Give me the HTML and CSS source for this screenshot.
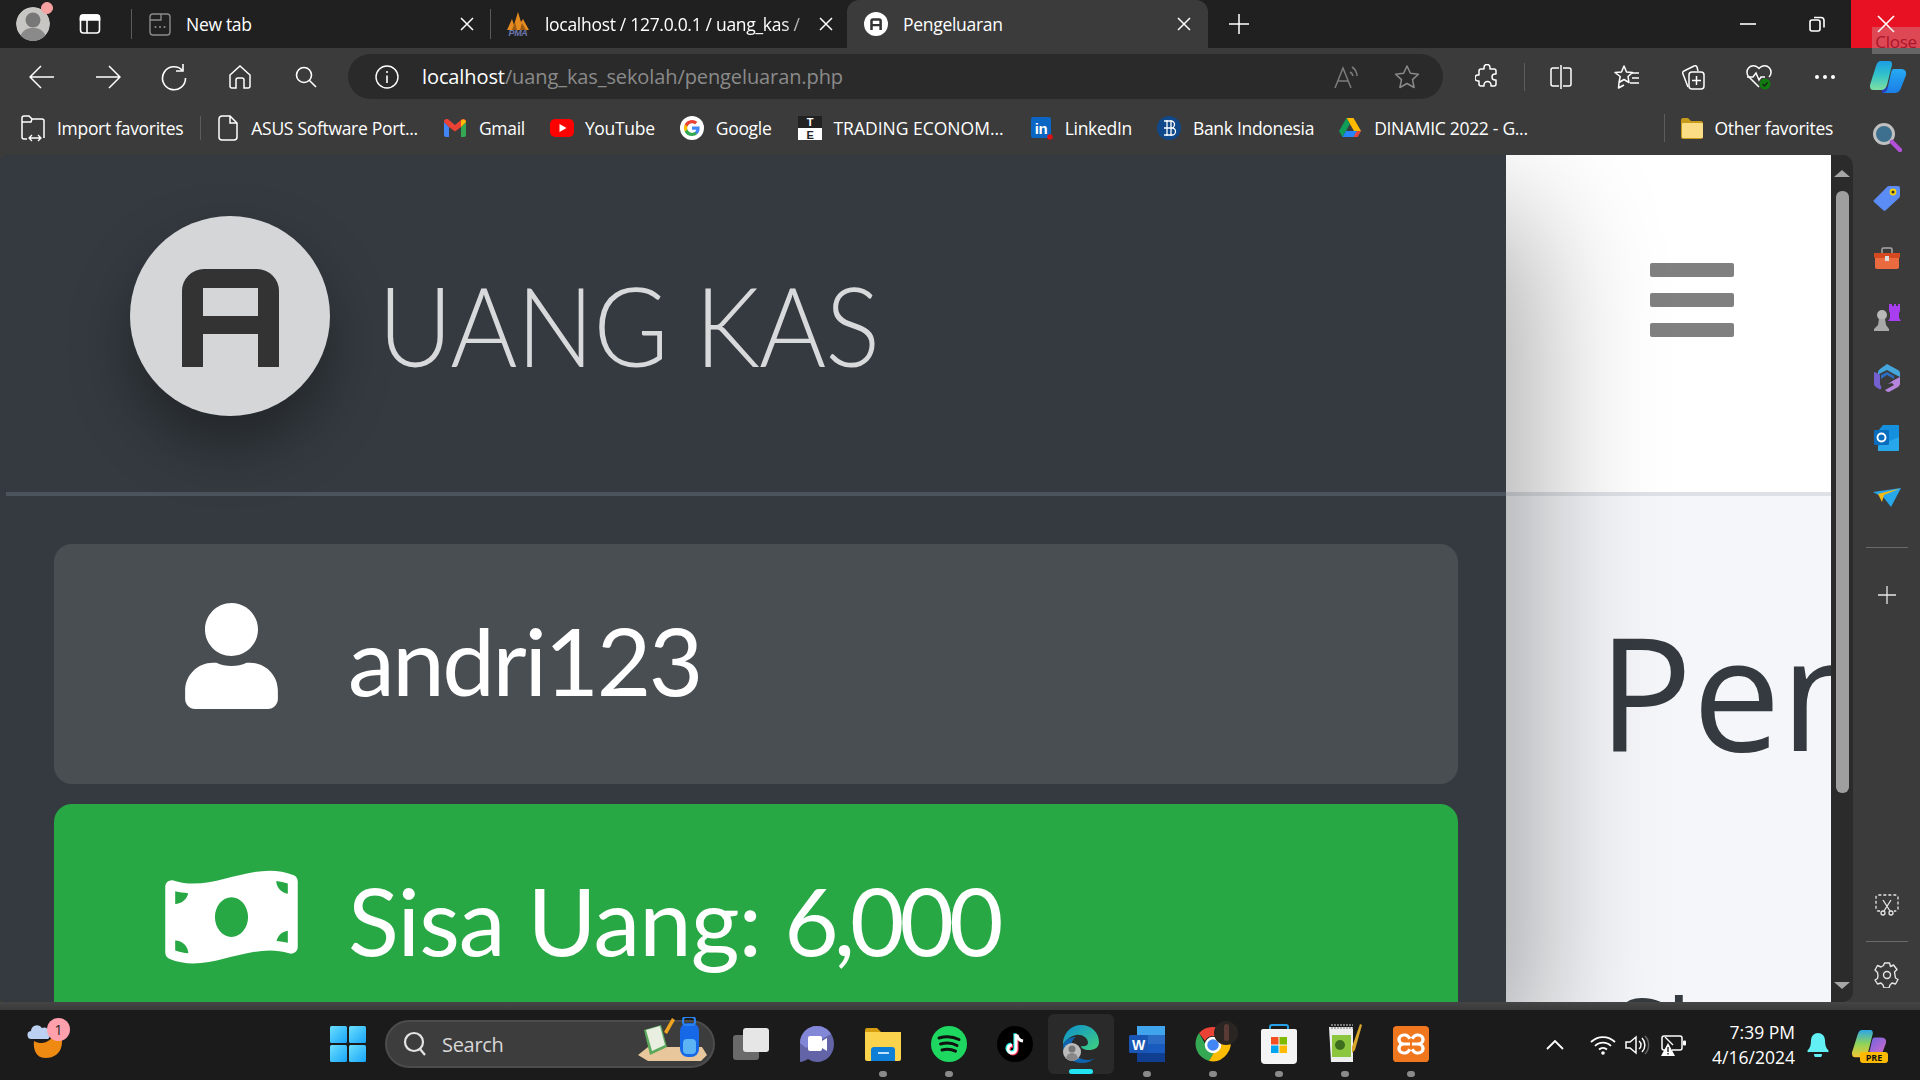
FILE: index.html
```html
<!DOCTYPE html>
<html lang="en">
<head>
<meta charset="utf-8">
<title>Pengeluaran</title>
<link rel="stylesheet" href="styles.css">
</head>
<body>
<header class="titlebar">
  <div class="profile"><svg width="34" height="34" viewBox="0 0 34 34"><circle cx="17" cy="17" r="17" fill="#c8c6c2"/><circle cx="17" cy="13" r="7.5" fill="#777"/><path d="M4 30c3-8 8-9 13-9s10 1 13 9c-3 3-8 4-13 4s-10-1-13-4z" fill="#8a8a8a"/></svg><span class="profile-dot"></span></div>
  <div class="tabact"><svg width="22" height="22" viewBox="0 0 22 22" fill="none" stroke="#fff" stroke-width="1.6"><rect x="1.5" y="2" width="19" height="18" rx="3"/><path d="M1.5 4.5a2.5 2.5 0 0 1 2.5-2.5h14a2.5 2.5 0 0 1 2.5 2.5v2.5h-19z" fill="#fff"/><path d="M8 7v13"/></svg></div>
  <span class="tdiv"></span>
  <div class="tab tab-new">
    <svg class="fav" width="22" height="24" viewBox="0 0 22 24" fill="none" stroke="#8b8b8b" stroke-width="1.4"><rect x="1" y="2" width="20" height="21" rx="3"/><path d="M1 8h11V2"/><path d="M6.5 15h.01M11 15h.01M15.5 15h.01" stroke-width="2.2" stroke-linecap="round"/></svg>
    <span class="tab-label">New tab</span>
    <svg class="x" width="14" height="14" viewBox="0 0 14 14" stroke="#fff" stroke-width="1.5"><path d="M1 1l12 12M13 1L1 13"/></svg>
  </div>
  <span class="tdiv tdiv2"></span>
  <div class="tab tab-pma">
    <svg class="fav" width="26" height="26" viewBox="0 0 26 26"><path d="M2 19L7 8l2 6 4-13 3 10 2-3 6 11z" fill="#e58a1f"/><path d="M7 19l3-8 2 8zM15 19l2-7 4 7z" fill="#9a5a12"/><text x="13" y="25" text-anchor="middle" font-size="9" font-weight="700" font-style="italic" fill="#6c78af" font-family="Liberation Sans, sans-serif">PMA</text></svg>
    <span class="tab-label tab-fade">localhost / 127.0.0.1 / uang_kas /</span>
    <svg class="x" width="14" height="14" viewBox="0 0 14 14" stroke="#fff" stroke-width="1.5"><path d="M1 1l12 12M13 1L1 13"/></svg>
  </div>
  <div class="tab tab-active">
    <svg class="fav" width="24" height="24" viewBox="0 0 200 200"><circle cx="100" cy="100" r="100" fill="#fff"/><path fill-rule="evenodd" d="M52 151V75a22 22 0 0 1 22-22h53a22 22 0 0 1 22 22v76h-21v-33H73v33zM73 72v28h55V72z" fill="#333"/></svg>
    <span class="tab-label">Pengeluaran</span>
    <svg class="x" width="14" height="14" viewBox="0 0 14 14" stroke="#fff" stroke-width="1.5"><path d="M1 1l12 12M13 1L1 13"/></svg>
  </div>
  <div class="newtab"><svg width="20" height="20" viewBox="0 0 20 20" stroke="#fff" stroke-width="1.5"><path d="M10 0v20M0 10h20"/></svg></div>
  <div class="winctl">
    <div class="wbtn"><svg width="16" height="16" viewBox="0 0 16 16" stroke="#fff" stroke-width="1.6"><path d="M0 8h16"/></svg></div>
    <div class="wbtn"><svg width="16" height="16" viewBox="0 0 16 16" fill="none" stroke="#fff" stroke-width="1.6"><rect x="1" y="4" width="10" height="11" rx="2"/><path d="M5 1.5h7a3 3 0 0 1 3 3v7"/></svg></div>
    <div class="wbtn wclose"><svg width="18" height="18" viewBox="0 0 18 18" stroke="#fff" stroke-width="1.7"><path d="M1 1l16 16M17 1L1 17"/></svg><span class="tooltip">Close</span></div>
  </div>
</header>

<nav class="toolbar">
  <div class="navbtns">
    <div class="tb"><svg width="26" height="26" viewBox="0 0 26 26" fill="none" stroke="#fff" stroke-width="1.5"><path d="M25 13H1M12 2L1 13l11 11"/></svg></div>
    <div class="tb"><svg width="26" height="26" viewBox="0 0 26 26" fill="none" stroke="#fff" stroke-width="1.5"><path d="M1 13h24M14 2l11 11-11 11"/></svg></div>
    <div class="tb"><svg width="26" height="28" viewBox="0 0 26 28" fill="none" stroke="#fff" stroke-width="1.6"><path d="M22 1v7h-7"/><path d="M21.500 7.500A11.500 11.500 0 1 0 24.500 15"/></svg></div>
    <div class="tb"><svg width="24" height="26" viewBox="0 0 24 26" fill="none" stroke="#fff" stroke-width="1.5"><path d="M2 11l10-9 10 9v11a2 2 0 0 1-2 2h-4v-8a2 2 0 0 0-2-2h-4a2 2 0 0 0-2 2v8H4a2 2 0 0 1-2-2z"/></svg></div>
    <div class="tb"><svg width="22" height="22" viewBox="0 0 22 22" fill="none" stroke="#fff" stroke-width="1.6"><circle cx="9" cy="9" r="7.5"/><path d="M14.5 14.5L21 21"/></svg></div>
  </div>
  <div class="omni">
    <svg class="omni-info" width="24" height="24" viewBox="0 0 24 24" fill="none" stroke="#fff" stroke-width="1.4"><circle cx="12" cy="12" r="11"/><path d="M12 10.5V18" stroke-width="1.6"/><circle cx="12" cy="7" r="1" fill="#fff" stroke="none"/></svg>
    <span class="url"><span class="url-host">localhost</span>/uang_kas_sekolah/pengeluaran.php</span>
    <svg class="omni-read" width="26" height="26" viewBox="0 0 26 26" fill="none" stroke="#7c7c7c" stroke-width="1.5"><path d="M1 24L9 4l8 20M4 17h10M16 8a6 6 0 0 1 3 4M18 3a11 11 0 0 1 5 9"/></svg>
    <svg class="omni-star" width="26" height="26" viewBox="0 0 26 26" fill="none" stroke="#8a8a8a" stroke-width="1.5" stroke-linejoin="round"><path d="M13 2l3.4 7.3 8 .9-5.9 5.4 1.6 7.9-7.1-4-7.1 4 1.6-7.9L1.600 10.200l8-.9z"/></svg>
  </div>
  <div class="tb tb-ext"><svg width="24" height="26" viewBox="0 0 24 26" fill="none" stroke="#fff" stroke-width="1.5" stroke-linejoin="round"><path d="M9 3.500a3 3 0 0 1 6 0V5h4a2 2 0 0 1 2 2v3h-1a3 3 0 0 0 0 6h1v4a2 2 0 0 1-2 2h-3v-1a3.500 3.500 0 0 0-7 0v1H6a2 2 0 0 1-2-2v-3H3a3 3 0 0 1 0-6h1V7a2 2 0 0 1 2-2h3z"/></svg></div>
  <span class="tbdiv"></span>
  <div class="tb"><svg width="24" height="26" viewBox="0 0 24 26" fill="none" stroke="#fff" stroke-width="1.5"><path d="M10 4H4a2 2 0 0 0-2 2v14a2 2 0 0 0 2 2h6M14 4h6a2 2 0 0 1 2 2v14a2 2 0 0 1-2 2h-6M12 1v24"/></svg></div>
  <div class="tb"><svg width="26" height="26" viewBox="0 0 26 26" fill="none" stroke="#fff" stroke-width="1.5" stroke-linejoin="round"><path d="M10 2l2.500 6 6 .5-4.500 4 1 6-5-3-5 3 1.200-6L1 8.500 7.500 8zM5 19l-.5 5 5.500-3"/><path d="M18 9h7M18 14h7M16 19h9"/></svg></div>
  <div class="tb"><svg width="26" height="28" viewBox="0 0 26 28" fill="none" stroke="#fff" stroke-width="1.5"><path d="M8 24L3 11a2 2 0 0 1 1-3l10-5a2 2 0 0 1 3 1l1 4"/><rect x="9" y="9" width="15" height="17" rx="3"/><path d="M16.500 13v9M12 17.500h9"/></svg></div>
  <div class="tb"><svg width="26" height="28" viewBox="0 0 26 28"><path d="M13 24L3 14a6.500 6.500 0 0 1 9-9.500l1 1 1-1A6.500 6.500 0 0 1 23 14" fill="none" stroke="#fff" stroke-width="1.5"/><path d="M1 14h6l3-4 3 7 2-3h4" fill="none" stroke="#fff" stroke-width="1.5"/><circle cx="19" cy="21" r="5.500" fill="#107c10"/><path d="M16.500 21l2 2 3-3.500" stroke="#1a1a1a" fill="none" stroke-width="1.2"/></svg></div>
  <div class="tb tb-dots"><span></span><span></span><span></span></div>
  <div class="tb tb-copilot"><svg width="36" height="32" viewBox="0 0 36 32"><defs><linearGradient id="cp1" x1="0" y1="0" x2="0" y2="1"><stop offset="0" stop-color="#1a9de6"/><stop offset=".5" stop-color="#35c4c8"/><stop offset="1" stop-color="#7fe0a0"/></linearGradient><linearGradient id="cp2" x1="0" y1="0" x2="0" y2="1"><stop offset="0" stop-color="#27a9f2"/><stop offset="1" stop-color="#1a7ee8"/></linearGradient></defs><path d="M12 32h12c4 0 6-2 7-5l5-13c1-3-1-6-5-6h-7c-2 0-2 1-3 4l-3 13c-1 3-3 5-6 5z" fill="url(#cp2)"/><path d="M12 26h6l-1 3c-1 2-3 3-5 3z" fill="#2a3fb8"/><path d="M11 0h8c3 0 3 2 3 4l-5 20c-1 3-3 5-6 5H3c-3 0-3-3-3-5L6 5c1-3 2-5 5-5z" fill="url(#cp1)"/></svg></div>
</nav>

<div class="workspace">
  <div class="workcol">
    <div class="bookmarks">
      <div class="bm bm-import"><svg width="26" height="28" viewBox="0 0 26 28" fill="none" stroke="#fff" stroke-width="1.5"><path d="M7 25H4a2 2 0 0 1-2-2V4a2 2 0 0 1 2-2h5l3 3h10a2 2 0 0 1 2 2v17"/><path d="M2 8h9l1-3"/><path d="M9 24h12M12 21l-3 3 3 3M18 21l3 3-3 3" stroke-width="1.300"/></svg><span>Import favorites</span></div>
      <span class="bmdiv"></span>
      <div class="bm bm-asus"><svg width="20" height="26" viewBox="0 0 20 26" fill="none" stroke="#fff" stroke-width="1.5"><path d="M12 1H4a3 3 0 0 0-3 3v18a3 3 0 0 0 3 3h12a3 3 0 0 0 3-3V8zM12 1v7h7"/></svg><span>ASUS Software Port...</span></div>
      <div class="bm bm-gmail"><svg width="22" height="18" viewBox="0 0 22 18"><path d="M0 3v13a2 2 0 0 0 2 2h3V8z" fill="#4285f4"/><path d="M22 3v13a2 2 0 0 1-2 2h-3V8z" fill="#34a853"/><path d="M0 3c0-3 3-4 5-2l6 5 6-5c2-2 5-1 5 2l-5 5-6 4.500L5 8z" fill="#ea4335"/><path d="M17 1.500c2-2 5-1 5 1.500l-5 5z" fill="#fbbc04"/></svg><span>Gmail</span></div>
      <div class="bm bm-yt"><svg width="24" height="18" viewBox="0 0 24 18"><rect width="24" height="18" rx="5" fill="#f00"/><path d="M9.500 5l7 4-7 4z" fill="#fff"/></svg><span>YouTube</span></div>
      <div class="bm bm-google"><svg width="24" height="24" viewBox="0 0 24 24"><circle cx="12" cy="12" r="12" fill="#fff"/><path d="M19.600 12.200c0-.6-.05-1.100-.15-1.600H12v3.100h4.300a3.700 3.700 0 0 1-1.600 2.400v2h2.600c1.500-1.400 2.300-3.400 2.300-5.900z" fill="#4285f4"/><path d="M12 20c2.200 0 4-.7 5.300-1.900l-2.600-2c-.7.500-1.600.8-2.700.8-2.100 0-3.900-1.400-4.500-3.300H4.800v2.100A8 8 0 0 0 12 20z" fill="#34a853"/><path d="M7.500 13.600a4.800 4.800 0 0 1 0-3.100V8.300H4.800a8 8 0 0 0 0 7.300z" fill="#fbbc05"/><path d="M12 7.200c1.200 0 2.200.4 3 1.200l2.300-2.300A8 8 0 0 0 4.800 8.400l2.700 2.100C8.100 8.600 9.900 7.200 12 7.200z" fill="#ea4335"/></svg><span>Google</span></div>
      <div class="bm bm-te"><svg width="24" height="24" viewBox="0 0 24 24" font-family="Liberation Sans, sans-serif" font-weight="700" font-size="11"><rect width="24" height="12" fill="#222"/><rect y="12" width="24" height="12" fill="#fff"/><text x="12" y="10" text-anchor="middle" fill="#fff">T</text><text x="12" y="22.500" text-anchor="middle" fill="#222">E</text></svg><span>TRADING ECONOM...</span></div>
      <div class="bm bm-li"><svg width="24" height="24" viewBox="0 0 24 24" font-family="Liberation Sans, sans-serif" font-weight="700"><rect x="1" y="1" width="20" height="21" rx="2" fill="#0a66c2"/><text x="11" y="18" text-anchor="middle" fill="#fff" font-size="15">in</text><circle cx="20" cy="21" r="2.800" fill="#d11"/></svg><span>LinkedIn</span></div>
      <div class="bm bm-bi"><svg width="24" height="24" viewBox="0 0 24 24"><circle cx="12" cy="12" r="12" fill="#10488a"/><path d="M10 4v16M14 4v16M7 5h7a3 3 0 0 1 0 7H7h8a3.500 3.500 0 0 1 0 7H7" fill="none" stroke="#fff" stroke-width="1.300"/></svg><span>Bank Indonesia</span></div>
      <div class="bm bm-drive"><svg width="22" height="20" viewBox="0 0 22 20"><path d="M7.500 0h7l7.500 13h-7z" fill="#ffba00"/><path d="M7.500 0L0 13l3.500 6L11 6z" fill="#0f9d58"/><path d="M7 13h15l-3.500 6h-15z" fill="#2684fc"/><path d="M14.500 19H18.500L22 13h-4z" fill="#ea4335"/></svg><span>DINAMIC 2022 - G...</span></div>
      <span class="bmdiv bmdiv2"></span>
      <div class="bm bm-other"><svg width="24" height="24" viewBox="0 0 24 24"><path d="M1 4a2 2 0 0 1 2-2h5l3 3h10a2 2 0 0 1 2 2v14a2 2 0 0 1-2 2H3a2 2 0 0 1-2-2z" fill="#c69a1a"/><rect x="2" y="7" width="21" height="15" rx="1" fill="#fbdd85"/></svg><span>Other favorites</span></div>
    </div>
    <div class="viewrow">
      <main class="page">
        <aside class="side">
          <div class="side-head">
            <div class="logo"><svg width="200" height="200" viewBox="0 0 200 200"><path fill-rule="evenodd" d="M52 151V75a22 22 0 0 1 22-22h53a22 22 0 0 1 22 22v76h-21v-33H73v33zM73 72v28h55V72z" fill="#333"/></svg></div>
            <span class="brand">UANG KAS</span>
          </div>
          <div class="side-line"></div>
          <div class="side-cards">
            <div class="card card-user"><span class="card-ic"><svg width="93" height="106" viewBox="0 0 448 512" fill="#fff"><path d="M224 256c70.700 0 128-57.300 128-128S294.700 0 224 0 96 57.300 96 128s57.300 128 128 128zm89.600 32h-16.700c-22.200 10.200-46.900 16-72.900 16s-50.600-5.800-72.900-16h-16.700C60.200 288 0 348.200 0 422.400V464c0 26.500 21.500 48 48 48h352c26.500 0 48-21.500 48-48v-41.600c0-74.200-60.200-134.400-134.400-134.400z"/></svg></span><span class="card-text">andri123</span></div>
            <div class="card card-money"><span class="card-ic"><svg width="133" height="106" viewBox="0 0 640 512" fill="#fff"><path d="M621.160 54.460C582.370 38.190 543.550 32 504.750 32c-123.170-.01-246.330 62.340-369.500 62.340-30.890 0-61.760-3.920-92.650-13.720-3.470-1.100-6.950-1.620-10.350-1.620C15.040 79 0 92.320 0 110.810v317.260c0 12.630 7.230 24.600 18.840 29.460C57.630 473.810 96.450 480 135.250 480c123.170 0 246.340-62.350 369.510-62.350 30.890 0 61.760 3.920 92.650 13.720 3.470 1.100 6.950 1.620 10.350 1.620 17.210 0 32.250-13.320 32.250-31.810V83.930c-.01-12.640-7.240-24.600-18.850-29.470zM48 132.220c20.120 5.040 41.120 7.570 62.720 8.930C104.840 170.540 79 192.690 48 192.690v-60.470zm0 285v-47.780c34.370 0 62.180 27.270 63.710 61.400-22.530-1.810-43.590-6.310-63.710-13.620zM320 352c-44.190 0-80-42.990-80-96 0-53.020 35.820-96 80-96s80 42.980 80 96c0 53.030-35.830 96-80 96zm272 27.780c-17.520-4.390-35.710-6.850-54.320-8.440 5.870-26.080 27.500-45.880 54.320-49.280v57.720zm0-236.110c-30.890-3.910-54.860-29.700-55.810-61.550 19.540 2.170 38.090 6.230 55.810 12.660v48.890z"/></svg></span><span class="card-text card-text-money">Sisa Uang: <span class="digits">6,000</span></span></div>
          </div>
        </aside>
        <section class="content">
          <div class="content-head"><div class="burger"><span></span><span></span><span></span></div></div>
          <div class="content-body">
            <h1 class="page-title">Pengeluaran</h1>
            <p class="page-sub">Sh</p>
          </div>
        </section>
      </main>
      <div class="scrollbar">
        <span class="arrow-up"></span>
        <span class="thumb"></span>
        <span class="arrow-down"></span>
      </div>
    </div>
  </div>
  <aside class="edgebar">
    <div class="eb eb-search"><svg width="30" height="30" viewBox="0 0 30 30"><circle cx="12" cy="12" r="9.500" fill="#3d6f8e" stroke="#c0c0c0" stroke-width="3"/><path d="M19 19l2 2" stroke="#c0c0c0" stroke-width="3"/><path d="M20 20l8 8" stroke="#b44fd8" stroke-width="4.500" stroke-linecap="round"/></svg></div>
    <div class="eb eb-tag"><svg width="28" height="26" viewBox="0 0 28 26"><path d="M1 15L14 2a3 3 0 0 1 2-1h9a2 2 0 0 1 2 2v8a3 3 0 0 1-1 2L13 25a2 2 0 0 1-3 0L1 17a1.500 1.500 0 0 1 0-2z" fill="#5b8cf5"/><circle cx="20" cy="7" r="2.500" fill="#333" stroke="#f3d20e" stroke-width="1.800"/></svg></div>
    <div class="eb eb-box"><svg width="28" height="22" viewBox="0 0 28 22"><path d="M9 6V2.500A1.500 1.500 0 0 1 10.500 1h7A1.500 1.500 0 0 1 19 2.500V6" fill="none" stroke="#aaa" stroke-width="1.500"/><path d="M1 6h26v4l-1 1H2l-1-1z" fill="#d4491f"/><path d="M2 11h24v9a2 2 0 0 1-2 2H4a2 2 0 0 1-2-2z" fill="#ea6b40"/><rect x="12" y="9" width="4" height="5" fill="#ddd"/></svg></div>
    <div class="eb eb-chess"><svg width="28" height="30" viewBox="0 0 28 30"><circle cx="9" cy="12" r="5" fill="#b8b8b8"/><path d="M6 16h6l1 6 3 4v2H1v-2l4-4z" fill="#a8a8a8"/><path d="M16 1h3v2h2V1h2v2h2V1h2v7l-1 2v5l2 3H15l2-3v-5l-1-2z" fill="#a93ef0"/></svg></div>
    <div class="eb eb-m365"><svg width="26" height="28" viewBox="0 0 26 28"><path d="M13 0l11 6c1.500 1 2 2 2 3v4l-6-3-7-4-6 3-3 2V8c0-1 1-2 2-3z" fill="#45a6dc"/><path d="M0 8v12c0 1 .5 2 2 3l3 2c2 1 3-1 2-3-1-1-1-2-1-3V11l-3-2z" fill="#7560cf"/><path d="M26 13v7c0 1-1 2-2 3l-9 5c-2 0-3-1-4-2l9-5-2-2-4 1 6-4z" fill="#b584dd"/><path d="M7 11l6-3 7 4v3l-7-4-6 4z" fill="#2c6dc2"/></svg></div>
    <div class="eb eb-outlook"><svg width="26" height="26" viewBox="0 0 26 26" font-family="Liberation Sans, sans-serif"><path d="M9 0h15a1 1 0 0 1 1 1v24H4V6z" fill="#1490df"/><path d="M25 12v13a1 1 0 0 1-1 1H4V21z" fill="#28a8ea"/><rect x="0" y="5" width="15" height="15" rx="1" fill="#0a6cbd"/><circle cx="7.500" cy="12.500" r="4" fill="none" stroke="#fff" stroke-width="1.900"/></svg></div>
    <div class="eb eb-send"><svg width="28" height="20" viewBox="0 0 28 20"><path d="M0 5l28-4-10 19-7-9z" fill="#28a8ea"/><path d="M5 7l22-5.500L11 8l-2 7z" fill="#f5b914"/></svg></div>
    <span class="eb-div eb-div1"></span>
    <div class="eb eb-plus"><svg width="18" height="18" viewBox="0 0 18 18" stroke="#e6e6e6" stroke-width="1.300"><path d="M9 0v18M0 9h18"/></svg></div>
    <div class="eb eb-snip"><svg width="24" height="22" viewBox="0 0 24 22" fill="none" stroke="#e6e6e6" stroke-width="1.300"><path d="M5 17H3a2 2 0 0 1-2-2V3a2 2 0 0 1 2-2h18a2 2 0 0 1 2 2v12a2 2 0 0 1-2 2h-2" stroke-dasharray="3 2"/><path d="M8 6l7 11M16 6L9 17"/><circle cx="8" cy="19" r="2"/><circle cx="16" cy="19" r="2"/></svg></div>
    <span class="eb-div eb-div2"></span>
    <div class="eb eb-gear"><svg width="26" height="26" viewBox="0 0 26 26" fill="none" stroke="#e6e6e6" stroke-width="1.400" stroke-linejoin="round"><path d="M10.500 1h5l1 3.500 3-1.500 3.500 4.500-2.500 2.500.5 3 .5 3 2.500 1.500-2.500 4.500-3.500-1-2 2-1 3h-5l-1-3-2-2-3.500 1L1 18l2.500-1.500.5-3-.5-3L1 8l2.500-4.500 3.500 1.500 2.500-1.500z"/><circle cx="13" cy="13" r="3.500"/></svg></div>
  </aside>
</div>
<div class="strip"></div>
<footer class="taskbar">
  <div class="tk-left"><svg width="40" height="42" viewBox="0 0 40 42"><path d="M8 24c10 6 20-2 21-10l4-1c5 8 6 28-14 28C10 41 7 32 8 24z" fill="#ee8a12"/><path d="M6 22a4 4 0 0 1-1-8 6 6 0 0 1 11-3 5 5 0 0 1 7 6 4 4 0 0 1-1 5z" fill="#bcd1f1"/></svg><span class="tk-badge">1</span></div>
  <div class="tk-center">
    <div class="tk-start"><svg width="36" height="36" viewBox="0 0 36 36"><defs><linearGradient id="w1" x1="0" y1="0" x2="1" y2="1"><stop offset="0" stop-color="#6ce0ff"/><stop offset="1" stop-color="#17a4f7"/></linearGradient></defs><rect x="0" y="0" width="17" height="17" rx="1.500" fill="url(#w1)"/><rect x="19" y="0" width="17" height="17" rx="1.500" fill="url(#w1)"/><rect x="0" y="19" width="17" height="17" rx="1.500" fill="url(#w1)"/><rect x="19" y="19" width="17" height="17" rx="1.500" fill="url(#w1)"/></svg></div>
    <div class="tk-search">
      <svg width="24" height="26" viewBox="0 0 24 26" fill="none" stroke="#e4e4e4" stroke-width="2.200"><circle cx="11" cy="11" r="9"/><path d="M17 18l5 6"/></svg>
      <span class="tk-search-text">Search</span>
      <svg class="tk-search-art" width="72" height="46" viewBox="0 0 72 46"><path d="M2 38l10-8h54l5 8-6 6H12z" fill="#e8c79c"/><path d="M8 13l17-5 6 22-17 8z" fill="#5ca85c"/><path d="M10 13l14-4 5 19-13 6z" fill="#e8efe0"/><path d="M28 15l8-14 3 2-8 14z" fill="#f0a520"/><rect x="44" y="6" width="19" height="34" rx="8" fill="#1668e6"/><rect x="47" y="0" width="12" height="8" rx="3" fill="none" stroke="#2a83ee" stroke-width="2"/><rect x="47" y="22" width="13" height="15" rx="4" fill="#5db4f5"/></svg>
    </div>
    <div class="tk-app"><svg width="36" height="32" viewBox="0 0 36 32"><rect x="0" y="7" width="26" height="25" rx="3" fill="#6a6a6a"/><rect x="10" y="0" width="26" height="24" rx="3" fill="#e6e6e6"/></svg></div>
    <div class="tk-app"><svg width="34" height="36" viewBox="0 0 34 36"><path d="M17 0C7 0 0 8 0 17v11c0 3-1 6-1 8 3 0 6-1 9-3 3 2 6 3 9 3 10 0 17-8 17-18S27 0 17 0z" fill="#6264a7"/><path d="M0 17C0 8 7 0 17 0c6 0 11 3 14 8L6 22z" fill="#8387d8"/><rect x="8" y="10" width="14" height="15" rx="2" fill="#fff"/><path d="M22 15l5-3v13l-5-3z" fill="#fff"/></svg></div>
    <div class="tk-app"><svg width="36" height="34" viewBox="0 0 36 34"><path d="M0 3a2 2 0 0 1 2-2h10l4 4h18a2 2 0 0 1 2 2v3H0z" fill="#d59d0f"/><path d="M0 5h36v27a2 2 0 0 1-2 2H2a2 2 0 0 1-2-2z" fill="#fcd34d"/><path d="M6 23a3 3 0 0 1 3-3h18a3 3 0 0 1 3 3v11H6z" fill="#0f7ed6"/><rect x="13" y="25" width="11" height="2" fill="#bfe3ff"/></svg><span class="tk-dot"></span></div>
    <div class="tk-app"><svg width="36" height="36" viewBox="0 0 36 36"><circle cx="18" cy="18" r="18" fill="#1ed760"/><path d="M8 12c7-2 14-1.500 20 1.500M9.500 18c6-1.500 12-1 16.500 1.500M11 24c5-1.200 9.500-.8 13.500 1.200" fill="none" stroke="#111" stroke-width="3" stroke-linecap="round"/></svg><span class="tk-dot"></span></div>
    <div class="tk-app"><svg width="36" height="36" viewBox="0 0 36 36"><circle cx="18" cy="18" r="18" fill="#000"/><path d="M19 8v15a4 4 0 1 1-4-4" fill="none" stroke="#ff2d55" stroke-width="3.200" transform="translate(1 .8)"/><path d="M19 8v15a4 4 0 1 1-4-4" fill="none" stroke="#25f4ee" stroke-width="3.200" transform="translate(-1 -.8)"/><path d="M19 8v15a4 4 0 1 1-4-4" fill="none" stroke="#fff" stroke-width="3"/><path d="M20 9c.5 3 3 5.500 6 6" fill="none" stroke="#fff" stroke-width="3"/></svg></div>
    <div class="tk-app tk-active"><svg width="36" height="38" viewBox="0 0 36 38"><defs><linearGradient id="e1" x1="0" y1="0" x2="1" y2="1"><stop offset="0" stop-color="#0c8fd0"/><stop offset="1" stop-color="#3fd07e"/></linearGradient></defs><path d="M0 17C1 7 9 0 18 0c11 0 18 8 18 17 0 6-5 8-10 8s-8-2-8-4c4 1 7-1 7-3 0-6-7-9-12-8S2 15 0 20z" fill="url(#e1)"/><path d="M0 20c2-6 8-8 13-8-5 3-6 10-3 15 3 5 9 8 15 8 3 0 5-1 7-2-3 3-8 5-13 5C9 38 0 31 0 20z" fill="#0c63b0"/><circle cx="9" cy="27" r="9" fill="#bcbcbc"/><circle cx="9" cy="24" r="3.500" fill="#777"/><path d="M3 33c1-4 4-5 6-5s5 1 6 5c-2 2-4 3-6 3s-4-1-6-3z" fill="#888"/></svg><span class="tk-ind"></span></div>
    <div class="tk-app"><svg width="36" height="36" viewBox="0 0 36 36" font-family="Liberation Sans, sans-serif" font-weight="700"><rect x="8" y="0" width="28" height="36" rx="2" fill="#2b6cc5"/><rect x="8" y="0" width="28" height="9" fill="#41a5ee"/><rect x="8" y="18" width="28" height="9" fill="#185abd"/><rect x="8" y="27" width="28" height="9" fill="#103f91"/><rect x="0" y="9" width="19" height="18" rx="1.500" fill="#1a56b4"/><text x="9.500" y="23.500" text-anchor="middle" fill="#fff" font-size="14">W</text></svg><span class="tk-dot"></span></div>
    <div class="tk-app tk-chrome"><svg width="44" height="46" viewBox="0 0 44 46"><path d="M18 6a18 18 0 0 1 16 9H18a9 9 0 0 0-8 5L4 12a18 18 0 0 1 14-6z" fill="#ea4335"/><path d="M4 12l8 14a9 9 0 0 0 8 4l-6 10A18 18 0 0 1 4 12z" fill="#34a853"/><path d="M34 15a18 18 0 0 1-20 25l8-14a9 9 0 0 0 2-11z" fill="#fbbc05"/><circle cx="18" cy="24" r="7" fill="#4285f4" stroke="#fff" stroke-width="2.500"/><circle cx="31" cy="12" r="12" fill="#2a2523"/><rect x="29" y="3" width="5" height="17" rx="2.500" fill="#5a3a34"/></svg><span class="tk-dot"></span></div>
    <div class="tk-app"><svg width="36" height="40" viewBox="0 0 36 40"><path d="M9 6V3a2 2 0 0 1 2-2h14a2 2 0 0 1 2 2v3" fill="none" stroke="#25a2e8" stroke-width="2"/><path d="M0 7a2 2 0 0 1 2-2h32a2 2 0 0 1 2 2v29a4 4 0 0 1-4 4H4a4 4 0 0 1-4-4z" fill="#f4f4f4"/><rect x="10" y="13" width="7.500" height="7.500" fill="#f25022"/><rect x="18.500" y="13" width="7.500" height="7.500" fill="#7fba00"/><rect x="10" y="21.500" width="7.500" height="7.500" fill="#00a4ef"/><rect x="18.500" y="21.500" width="7.500" height="7.500" fill="#ffb900"/></svg><span class="tk-dot"></span></div>
    <div class="tk-app"><svg width="34" height="42" viewBox="0 0 34 42"><path d="M1 4h24v35H3z" fill="#eee"/><rect x="4" y="12" width="19" height="22" fill="#8cc63f"/><circle cx="12" cy="22" r="5" fill="#3c6e1e"/><path d="M24 24L32 1l2 1-7 25-3 3z" fill="#d9a52a"/><path d="M3 2h22M3 5h22" stroke="#999" stroke-width="1.500" stroke-dasharray="2 1"/></svg><span class="tk-dot"></span></div>
    <div class="tk-app"><svg width="36" height="36" viewBox="0 0 36 40" preserveAspectRatio="none" fill="none"><rect width="36" height="40" rx="4" fill="#f1771f"/><path d="M17 20h-6a5 5 0 0 1 0-10h1c2 0 3 1 5 4M17 20h-6a5 5 0 0 0 0 10h1c2 0 3-1 5-4M19 20h6a5 5 0 0 0 0-10h-1c-2 0-3 1-5 4M19 20h6a5 5 0 0 1 0 10h-1c-2 0-3-1-5-4" stroke="#fff" stroke-width="3.400"/></svg><span class="tk-dot"></span></div>
  </div>
  <div class="tk-tray">
    <svg class="tr-chev" width="18" height="10" viewBox="0 0 18 10" fill="none" stroke="#fff" stroke-width="1.800"><path d="M1 9l8-8 8 8"/></svg>
    <svg class="tr-wifi" width="26" height="20" viewBox="0 0 26 20" fill="none" stroke="#fff" stroke-width="1.800"><path d="M1 7a17 17 0 0 1 24 0M5 11a11 11 0 0 1 16 0M9 14.500a6 6 0 0 1 8 0"/><circle cx="13" cy="18" r="1.800" fill="#fff" stroke="none"/></svg>
    <svg class="tr-vol" width="26" height="20" viewBox="0 0 26 20" fill="none" stroke="#fff" stroke-width="1.500"><path d="M1 7h4l6-5v16l-6-5H1z"/><path d="M14 6a5 5 0 0 1 0 8M17 3a10 10 0 0 1 0 14"/><path d="M20 1a13 13 0 0 1 0 18" stroke="#666"/></svg>
    <svg class="tr-bat" width="26" height="22" viewBox="0 0 26 22"><path d="M6 16H3a2 2 0 0 1-2-2V4a2 2 0 0 1 2-2h16a2 2 0 0 1 2 2v10a2 2 0 0 1-2 2H11" fill="none" stroke="#fff" stroke-width="1.500"/><path d="M4 3l8 8" stroke="#fff" stroke-width="1.200"/><rect x="22" y="6.500" width="3" height="5" rx="1" fill="#fff"/><path d="M7 9L14 22H0z" fill="#fff"/><rect x="6.300" y="13" width="1.400" height="5" fill="#1b1b1b"/><rect x="6.300" y="19" width="1.400" height="1.500" fill="#1b1b1b"/></svg>
    <div class="tr-clock"><span>7:39 PM</span><span>4/16/2024</span></div>
    <svg class="tr-bell" width="22" height="24" viewBox="0 0 22 24"><path d="M11 0a7 7 0 0 1 7 7c0 5 1 8 3 10a1 1 0 0 1-1 2H2a1 1 0 0 1-1-2c2-2 3-5 3-10a7 7 0 0 1 7-7z" fill="#62f0f5"/><path d="M7 21h8a4 4 0 0 1-8 0z" fill="#62f0f5"/></svg>
    <div class="tr-copilot"><svg width="34" height="32" viewBox="0 0 36 32"><defs><linearGradient id="cp3" x1="0" y1="0" x2="0" y2="1"><stop offset="0" stop-color="#2ca6e8"/><stop offset=".5" stop-color="#8dd35a"/><stop offset="1" stop-color="#f5c633"/></linearGradient><linearGradient id="cp4" x1="0" y1="0" x2="1" y2="1"><stop offset="0" stop-color="#5b63e8"/><stop offset="1" stop-color="#e86bc2"/></linearGradient></defs><path d="M12 32h12c4 0 6-2 7-5l5-13c1-3-1-6-5-6h-7c-2 0-2 1-3 4l-3 13c-1 3-3 5-6 5z" fill="url(#cp4)"/><path d="M11 0h8c3 0 3 2 3 4l-5 20c-1 3-3 5-6 5H3c-3 0-3-3-3-5L6 5c1-3 2-5 5-5z" fill="url(#cp3)"/></svg><span class="pre">PRE</span></div>
  </div>
</footer>
</body>
</html>
```

FILE: styles.css
```css
* { box-sizing: border-box; }
html, body { margin: 0; padding: 0; }
body {
  width: 1920px; height: 1080px; overflow: hidden;
  background: #3b3b3b; color: #fff;
  font-family: "Open Sans", "Noto Sans", sans-serif;
  display: flex; flex-direction: column;
}
svg { display: block; flex: none; }

/* title bar */
.titlebar { height: 48px; background: #202020; display: flex; align-items: center; flex: none; }
.profile { width: 34px; height: 34px; margin-left: 16px; position: relative; flex: none; }
.profile svg { border-radius: 50%; }
.profile-dot { position: absolute; left: 25px; top: -5px; width: 12px; height: 12px; border-radius: 50%; background: #f7a1a1; border: 1px solid #f7a1a1; }
.tabact { margin-left: 29px; width: 22px; }
.tdiv { width: 1px; height: 30px; background: #5a5a5a; margin-left: 30px; flex: none; }
.tab { display: flex; align-items: center; height: 48px; flex: none; font-size: 17.5px; letter-spacing: -.3px; }
.tab-new { width: 358px; padding-left: 17px; }
.tab-new .tab-label { margin-left: 15px; width: 274px; }
.tdiv2 { margin-left: 0; }
.tab-pma { width: 356px; padding-left: 14px; }
.tab-pma .tab-label { margin-left: 14px; width: 262px; white-space: nowrap; overflow: hidden; }
.tab-pma .x { margin-left: 12px; }
.tab-fade { -webkit-mask-image: linear-gradient(90deg, #000 90%, #777); mask-image: linear-gradient(90deg, #000 90%, rgba(0,0,0,.45)); }
.tab-active { width: 361px; background: #3b3b3b; border-radius: 12px 12px 0 0; padding-left: 17px; }
.tab-active .tab-label { margin-left: 15px; width: 274px; }
.newtab { margin-left: 21px; width: 20px; }
.winctl { margin-left: auto; display: flex; height: 48px; }
.wbtn { width: 69px; display: flex; align-items: center; justify-content: center; position: relative; }
.wclose { background: #e81123; }
.tooltip { position: absolute; left: 21px; top: 27px; width: 48px; height: 27px; background: rgba(200,200,200,.3); color: #a8162a; font-size: 17px; letter-spacing: -.3px; line-height: 29px; text-align: center; z-index: 5; overflow: hidden; }

/* toolbar */
.toolbar { height: 62px; padding-bottom: 5px; flex: none; display: flex; align-items: center; background: #3b3b3b; }
.navbtns { display: flex; margin-left: 9px; }
.tb { width: 66px; height: 40px; display: flex; align-items: center; justify-content: center; flex: none; }
.omni { width: 1095px; height: 45px; margin-left: 9px; background: #2a2a2a; border-radius: 23px; display: flex; align-items: center; padding-left: 27px; flex: none; }
.url { margin-left: 23px; width: 912px; font-size: 20px; letter-spacing: -.1px; color: #8a8a8a; white-space: nowrap; flex: none; }
.url-host { color: #fff; }
.omni-star { margin-left: 34px; }
.tb-ext { margin-left: 11px; }
.tbdiv { width: 1px; height: 28px; background: #5c5c5c; margin-left: 4px; margin-right: 3px; flex: none; }
.tb-dots { gap: 4px; }
.tb-dots span { width: 4px; height: 4px; border-radius: 50%; background: #fff; }
.tb-copilot { width: 36px; margin-left: 12px; }

/* workspace */
.workspace { flex: none; height: 892px; display: flex; }
.workcol { width: 1855px; display: flex; flex-direction: column; flex: none; }
.bookmarks { height: 45px; padding-bottom: 9px; flex: none; display: flex; align-items: center; font-size: 17.5px; letter-spacing: -.3px; }
.bm { display: flex; align-items: center; flex: none; white-space: nowrap; }
.bm-import { margin-left: 20px; gap: 11px; }
.bmdiv { width: 1px; height: 24px; background: #5c5c5c; flex: none; margin-left: 17px; }
.bm-asus { margin-left: 17px; gap: 13px; }
.bm-gmail { margin-left: 26px; gap: 13px; }
.bm-yt { margin-left: 25px; gap: 11px; }
.bm-google { margin-left: 25px; gap: 12px; }
.bm-te { margin-left: 27px; gap: 11px; }
.bm-te span { letter-spacing: 0; }
.bm-li { margin-left: 26px; gap: 11px; }
.bm-bi { margin-left: 25px; gap: 12px; }
.bm-drive { margin-left: 25px; gap: 13px; }
.bmdiv2 { margin-left: auto; height: 28px; }
.bm-other { margin-left: 15px; margin-right: 22px; gap: 11px; }

.viewrow { height: 847px; display: flex; flex: none; }
.page { width: 1831px; height: 847px; display: flex; overflow: hidden; border-radius: 8px 0 0 8px; background: #343a40; flex: none; }
.side { width: 1506px; height: 847px; flex: none; background: #343a40; position: relative; z-index: 2; box-shadow: 30px 60px 120px rgba(0,0,0,.32); }
.side-head { height: 337px; display: flex; padding: 61px 0 0 130px; gap: 48px; }
.logo { width: 200px; height: 200px; border-radius: 50%; background: #d5d6d8; box-shadow: 0 30px 60px rgba(0,0,0,.35); flex: none; }
.brand { font-family: Lato, sans-serif; font-weight: 300; font-size: 111px; line-height: 1; color: #d8d9db; letter-spacing: -1px; margin-top: 53px; white-space: nowrap; transform: scaleX(.925); transform-origin: left center; }
.side-line { height: 4px; margin-left: 6px; background: #4b545c; }
.side-cards { padding: 48px 48px 0 54px; display: flex; flex-direction: column; gap: 20px; }
.card { height: 240px; border-radius: 18px; display: flex; align-items: center; flex: none; font-family: Lato, sans-serif; font-size: 94px; letter-spacing: -2.4px; color: #fff; }
.card-user { background: #494e53; }
.card-money { background: #28a745; }
.card-ic { width: 135px; margin-left: 110px; display: flex; justify-content: center; flex: none; }
.card-text { margin-left: 49px; line-height: 1; white-space: nowrap; margin-top: -8px; }
.card-text-money { letter-spacing: -1px; }
.digits { letter-spacing: -5px; }
.card-user .card-ic { margin-top: -16px; }
.card-money .card-ic { margin-top: -14px; }

.content { width: 325px; flex: none; background: #f4f6f9; height: 847px; overflow: hidden; }
.content-head { height: 341px; background: #fff; border-bottom: 4px solid #dee2e6; padding: 108px 0 0 144px; }
.burger { width: 84px; display: flex; flex-direction: column; gap: 16px; }
.burger span { height: 14px; border-radius: 2px; background: #808080; }
.page-title { margin: 100px 0 0 92px; font-family: "Open Sans", sans-serif; font-weight: 400; font-size: 157px; line-height: 1.2; color: #343a40; white-space: nowrap; }
.page-sub { margin: 188px 0 0 108px; font-family: "Open Sans", sans-serif; font-size: 96px; line-height: 1.2; color: #343a40; white-space: nowrap; }

.scrollbar { width: 22px; height: 847px; background: #2b2b2b; border-radius: 0 10px 10px 0; display: flex; flex-direction: column; align-items: center; padding-top: 15px; flex: none; }
.arrow-up { width: 0; height: 0; border: 8px solid transparent; border-top: 0; border-bottom: 7px solid #a6a6a6; flex: none; }
.thumb { width: 13px; height: 602px; background: #9f9f9f; border-radius: 6px; margin-top: 14px; flex: none; }
.arrow-down { width: 0; height: 0; border: 8px solid transparent; border-bottom: 0; border-top: 7px solid #a6a6a6; margin-top: 189px; flex: none; }

/* edge sidebar */
.edgebar { width: 65px; flex: none; display: flex; flex-direction: column; align-items: center; padding: 12px 2px 0 0; }
.eb { display: flex; align-items: center; justify-content: center; width: 100%; height: 30px; flex: none; }
.eb-tag { margin-top: 31px; }
.eb-box, .eb-chess, .eb-m365, .eb-outlook { margin-top: 30px; }
.eb-send { margin-top: 29px; }
.eb-div { width: 42px; height: 1px; background: #6a6a6a; flex: none; }
.eb-div1 { margin-top: 35px; }
.eb-plus { margin-top: 32px; }
.eb-snip { margin-top: 280px; }
.eb-div2 { margin-top: 21px; }
.eb-gear { margin-top: 18px; }

/* bottom */
.strip { height: 8px; flex: none; background: linear-gradient(#454545, #3a3a3a); }
.taskbar { height: 70px; padding-bottom: 2px; flex: none; background: #1b1b1b; display: flex; align-items: center; position: relative; }
.tk-left { width: 330px; padding: 0 0 12px 26px; flex: none; position: relative; }
.tk-badge { position: absolute; left: 47px; top: 1px; width: 23px; height: 23px; border-radius: 50%; background: #ffa0ac; color: #222; font-size: 14px; line-height: 23px; text-align: center; }
.tk-center { display: flex; align-items: center; flex: none; }
.tk-start { width: 36px; flex: none; }
.tk-search { width: 330px; height: 48px; margin-left: 19px; border-radius: 24px; background: #3d3d3d; border: 2px solid #4c4c4c; display: flex; align-items: center; padding-left: 16px; flex: none; position: relative; }
.tk-search-text { margin-left: 15px; font-size: 20px; color: #d8d8d8; letter-spacing: -.3px; }
.tk-search-art { position: absolute; right: 5px; bottom: 3px; }
.tk-app { width: 66px; height: 60px; display: flex; align-items: center; justify-content: center; flex: none; position: relative; }
.tk-search + .tk-app { margin-left: 3px; }
.tk-dot { position: absolute; left: 29px; bottom: -3px; width: 8px; height: 6px; border-radius: 3px; background: #8a8a8a; }
.tk-active { background: #2a2a2a; border-radius: 6px; }
.tk-ind { position: absolute; left: 21px; bottom: 0; width: 24px; height: 5px; border-radius: 3px; background: #22e3f2; }
.tk-chrome svg { margin-left: 8px; }
.tk-tray { position: absolute; left: 1546px; top: 0; height: 70px; display: flex; align-items: center; }
.tr-wifi { margin-left: 26px; }
.tr-vol { margin-left: 9px; }
.tr-bat { margin-left: 10px; }
.tr-clock { width: 104px; margin-left: 4px; display: flex; flex-direction: column; align-items: flex-end; font-family: "Open Sans", sans-serif; font-size: 17.5px; line-height: 25px; }
.tr-bell { margin-left: 12px; }
.tr-copilot { margin-left: 23px; position: relative; width: 36px; }
.pre { position: absolute; left: 8px; top: 23px; width: 28px; height: 11px; border-radius: 3px; background: #ffb900; color: #111; font-size: 9px; font-weight: 700; line-height: 11px; text-align: center; }
```
